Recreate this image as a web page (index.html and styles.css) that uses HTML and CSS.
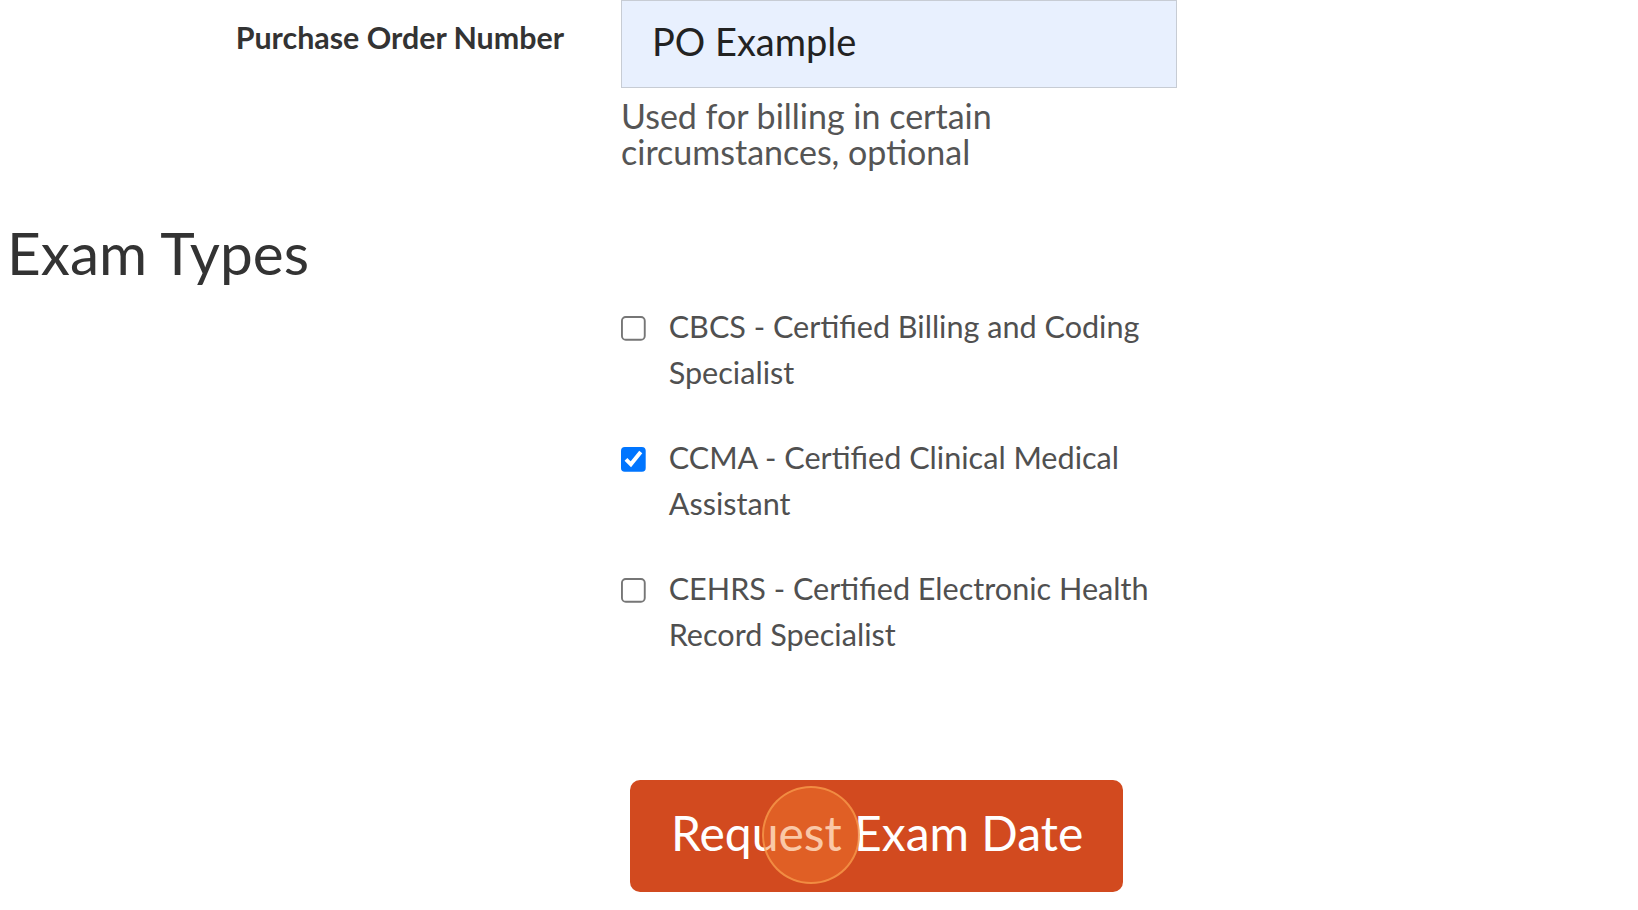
FILE: index.html
```html
<!DOCTYPE html>
<html lang="en">
<head>
    <meta charset="UTF-8">
    <meta name="viewport" content="width=device-width, initial-scale=1.0">
    <title>Request Exam Date</title>
    <link rel="stylesheet" href="styles.css">
</head>
<body>
    <div class="page">
        <div class="form-row">
            <label class="row-label" for="po-number">Purchase Order Number</label>
            <div class="field">
                <input type="text" id="po-number" class="text-input" value="PO Example">
                <p class="help-text">Used for billing in certain circumstances, optional</p>
            </div>
        </div>

        <h2 class="section-title">Exam Types</h2>

        <div class="form-row">
            <div></div>
            <div class="field">
                <ul class="exam-list">
                    <li class="exam-item">
                        <input type="checkbox" id="exam-cbcs" class="exam-check">
                        <label for="exam-cbcs">CBCS - Certified Billing and Coding Specialist</label>
                    </li>
                    <li class="exam-item">
                        <input type="checkbox" id="exam-ccma" class="exam-check" checked>
                        <label for="exam-ccma">CCMA - Certified Clinical Medical Assistant</label>
                    </li>
                    <li class="exam-item">
                        <input type="checkbox" id="exam-cehrs" class="exam-check">
                        <label for="exam-cehrs">CEHRS - Certified Electronic Health Record Specialist</label>
                    </li>
                </ul>
                <button class="submit-button" type="button">
                    Request Exam Date
                    <span class="click-ring"></span>
                </button>
            </div>
        </div>
    </div>
</body>
</html>
```

FILE: styles.css
```css
body {
    margin: 0;
    background-color: #ffffff;
    font-family: 'Lato', 'Liberation Sans', sans-serif;
    color: #333333;
}

.page {
    padding-left: 4px;
}

.form-row {
    display: grid;
    grid-template-columns: 617px 556px;
}

.row-label {
    text-align: right;
    padding: 19px 57px 0 0;
    font-size: 30.4px;
    line-height: 36px;
    font-weight: 700;
    color: #333333;
}

.text-input {
    display: block;
    width: 100%;
    height: 88px;
    box-sizing: border-box;
    padding: 0 30px 6px;
    background-color: #e8f0fe;
    border: 1px solid #c7ccd4;
    border-radius: 0;
    font-family: inherit;
    font-size: 38px;
    color: #222222;
    outline: none;
}

.help-text {
    margin: 10px 0 0;
    font-size: 34px;
    line-height: 36px;
    color: #555555;
}

.section-title {
    margin: 52px 0 0;
    padding-left: 3px;
    font-size: 58.5px;
    line-height: 60px;
    font-weight: 400;
    color: #333333;
}

.exam-list {
    list-style: none;
    margin: 22px 0 0;
    padding: 0;
    display: flex;
    flex-direction: column;
    gap: 39px;
}

.exam-item {
    display: flex;
    align-items: flex-start;
    gap: 23px;
}

.exam-check {
    flex: none;
    margin: 6.5px 0 0;
    zoom: 1.9;
}

.exam-item label {
    font-size: 30.6px;
    line-height: 46px;
    color: #505050;
}

.submit-button {
    position: relative;
    display: block;
    margin: 122px 0 0 9px;
    height: 112px;
    padding: 0 40px 8px 41px;
    background-color: #d24a1f;
    border: none;
    border-radius: 10px;
    color: #ffffff;
    font-family: inherit;
    font-size: 48px;
    cursor: pointer;
}

.click-ring {
    position: absolute;
    left: 132px;
    top: 6px;
    width: 98px;
    height: 98px;
    box-sizing: border-box;
    border-radius: 50%;
    background-color: rgba(242, 124, 46, 0.42);
    border: 2px solid rgba(250, 160, 80, 0.7);
}
```
